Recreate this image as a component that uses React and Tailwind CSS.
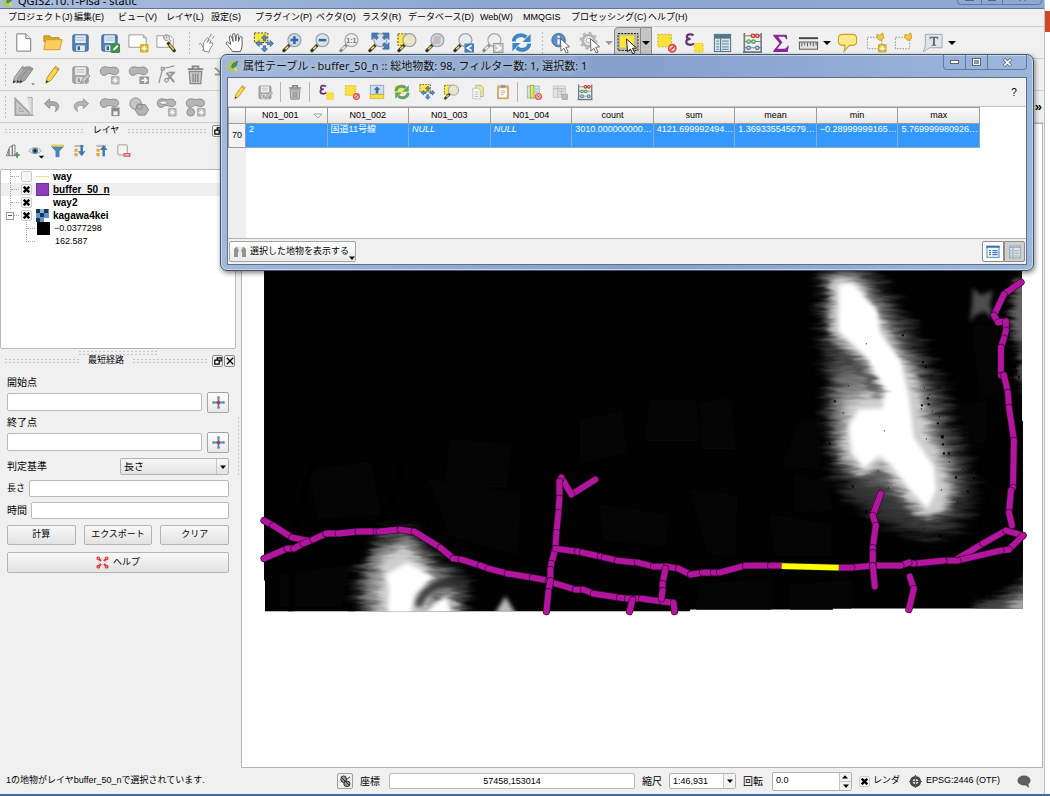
import React from "react";

/* ---------- icon drawings, all on a 24 unit grid ---------- */

function Svg({ children, className = "h-[23px] w-[23px]" }) {
  return (
    <svg viewBox="0 0 24 24" className={className} fill="none" aria-hidden="true">
      {children}
    </svg>
  );
}

const Star = ({ gray }) => (
  <g>
    <rect x="13.5" y="13.5" width="9" height="9" rx="1.5" fill={gray ? "#b0b0b0" : "#d9ae1f"} />
    <path d="M18 14.8v6.4M14.8 18h6.4M15.8 15.8l4.4 4.4M20.2 15.8l-4.4 4.4" stroke="#fff" strokeWidth="1" />
  </g>
);

const NewFile = () => (
  <Svg>
    <path d="M5 3h9.500l5 5v13H5z" fill="#fff" stroke="#777" />
    <path d="M14.500 3v5h5" fill="#eee" stroke="#777" />
  </Svg>
);

const Folder = () => (
  <Svg>
    <path d="M3 5h6l2 2h8v4H3z" fill="#d9a72c" stroke="#c08a1c" />
    <path d="M3 19.500L5 9h17l-2.500 10.500z" fill="#f8cf5c" stroke="#d29b26" />
  </Svg>
);

const DiskShape = ({ gray }) => (
  <g>
    <rect x="4" y="4" width="16" height="17" rx="1.500" fill={gray ? "#a9a9a9" : "#4f81b5"} stroke={gray ? "#8e8e8e" : "#33618f"} />
    <rect x="6.500" y="4.500" width="11" height="8" fill={gray ? "#efefef" : "#e3ecf5"} />
    <path d="M8 7h8M8 9.500h8" stroke={gray ? "#b5b5b5" : "#9db7d3"} />
    <rect x="7.500" y="15" width="9" height="6" fill="#e8e8e8" />
    <rect x="9" y="16" width="2.500" height="4" fill={gray ? "#999" : "#33618f"} />
  </g>
);
const Save = () => <Svg><DiskShape /></Svg>;
const SaveAs = () => (
  <Svg>
    <DiskShape />
    <rect x="13" y="13" width="10" height="10" rx="1.500" fill="#3f8f4a" />
    <path d="M15.500 20.500l1-2.500 3.500-3.500 1.500 1.500-3.500 3.500z" fill="#fff" />
  </Svg>
);
const SaveEdit = ({ className }) => (
  <Svg className={className}>
    <DiskShape gray />
    <path d="M12 21l1.500-4 6-6 2.500 2.500-6 6z" fill="#c4c4c4" stroke="#929292" />
  </Svg>
);

const NewComposer = () => (
  <Svg>
    <path d="M2 4h15l3 3v10H2z" fill="#fff" stroke="#999" />
    <path d="M17 4v3h3" stroke="#999" />
    <Star />
  </Svg>
);
const ComposerManager = () => (
  <Svg>
    <path d="M2 5h14l3 3v9H2z" fill="#fff" stroke="#999" />
    <path d="M9 5.500a3.500 3.500 0 0 0 4.500 4.500l2 2 1.500-1.500-2-2a3.500 3.500 0 0 0-4.500-4.500l2 2-1.500 1.800z" fill="#ddd" stroke="#888" strokeWidth=".8" />
    <path d="M14 13l6 7.500" stroke="#333" strokeWidth="3.500" strokeLinecap="round" />
    <path d="M15 14l4.500 5.500" stroke="#edc431" strokeWidth="2" />
  </Svg>
);
const Touch = () => (
  <Svg>
    <path d="M8 12l4-5 1.500 1-2 4 3-3 1 1-1.500 3 3-1 .5 2-3 5-1 3-5-1-1-4z" fill="#fff" stroke="#888" />
    <path d="M3 14l2-1 3 5-1 3M14 7l2-4M17 8l2-3" stroke="#888" />
  </Svg>
);
const Hand = () => (
  <Svg>
    <path d="M9 21.500c-2-3-4.500-6-6.500-8-1-1.500 1-2.500 2-1.500L7 14 5.500 6.500c0-1.800 2-1.800 2.500-.3L9.500 11 9 4c0-1.800 2.400-1.800 2.600 0l.7 6.500L13 4.500c.2-1.600 2.400-1.500 2.400.2L15 11l1.700-4.500c.6-1.400 2.500-.8 2.200.8C18.500 11 20 16 17 21.500z" fill="#fff" stroke="#555" />
  </Svg>
);
const PanSel = ({ className }) => (
  <Svg className={className}>
    <rect x="2.500" y="2" width="14" height="10" fill="#ffe837" stroke="#444" strokeDasharray="2 1.500" />
    <g fill="#5b89bd" stroke="#2f5f96" strokeWidth=".7">
      <path d="M13 4l3.200 3.500h-2v3h-2.400v-3h-2z" />
      <path d="M13 22l3.200-3.500h-2v-3h-2.400v3h-2z" />
      <path d="M4 13l3.500-3.200v2h3v2.400h-3v2z" />
      <path d="M22.500 13L19 9.800v2h-3v2.400h3v2z" />
    </g>
  </Svg>
);
const Lens = ({ fill = "#cfdce8", gray }) => (
  <g>
    <path d="M9 14.500l-6 6" stroke={gray ? "#888" : "#333"} strokeWidth="3.400" strokeLinecap="round" />
    <path d="M7.500 16l-3 3" stroke={gray ? "#eee" : "#f3cc3c"} strokeWidth="2" />
    <circle cx="14" cy="9.500" r="6.800" fill={fill} stroke={gray ? "#aaa" : "#9aa4ae"} strokeWidth="1.300" />
  </g>
);
const ZoomIn = () => <Svg><Lens /><path d="M14 5.500v8M10 9.500h8" stroke="#2f66a4" strokeWidth="2.600" /></Svg>;
const ZoomOut = () => <Svg><Lens fill="#dde4ea" /><path d="M10 9.500h8" stroke="#2f66a4" strokeWidth="2.600" /></Svg>;
const ZoomOne = () => (
  <Svg><Lens fill="#eee" gray /><text x="14" y="12.500" fontSize="7.500" fontWeight="bold" fill="#777" textAnchor="middle" fontFamily="Liberation Sans, sans-serif">1:1</text></Svg>
);
const ZoomFull = () => (
  <Svg>
    <Lens fill="#d8e2ea" />
    <g fill="#4a7db5" stroke="#2f5f96" strokeWidth=".6">
      <path d="M5 2h7L9.500 4.500l2.500 2L10 9 7.500 6.500 5 9z" />
      <path d="M23 2h-7l2.500 2.500-2.500 2L18 9l2.500-2.500L23 9z" />
      <path d="M23 19h-7l2.500-2.500-2.500-2 2-2.500 2.500 2.500L23 12z" />
    </g>
  </Svg>
);
const ZoomSel = ({ className }) => (
  <Svg className={className}><rect x="2" y="3" width="12" height="12" fill="#ffe837" stroke="#444" strokeDasharray="2 1.500" /><Lens fill="#e9e5c4" /></Svg>
);
const ZoomLayer = () => <Svg><Lens fill="#ddd8de" /><path d="M11 5h7l-1.500 8.500H9z" fill="#b9acb9" opacity=".7" /></Svg>;
const ZoomLast = () => (
  <Svg><Lens fill="#e9ecee" /><rect x="13" y="13" width="10" height="9.500" fill="#4a7db5" /><path d="M20.500 15l-4.500 2.800 4.500 2.700" stroke="#fff" strokeWidth="1.800" /></Svg>
);
const ZoomNext = () => (
  <Svg><Lens fill="#eee" gray /><rect x="13" y="13" width="10" height="9.500" fill="#ccc" stroke="#999" /><path d="M16 15l4.500 2.800-4.500 2.700" stroke="#fff" strokeWidth="1.800" /></Svg>
);
const Refresh = () => (
  <Svg>
    <path d="M4 11c0-6 8-9 13-4.500" stroke="#3f86c6" strokeWidth="4" />
    <path d="M21.500 3v8.500H13z" fill="#3f86c6" />
    <path d="M20 13c0 6-8 9-13 4.500" stroke="#3f86c6" strokeWidth="4" />
    <path d="M2.500 21v-8.500H11z" fill="#3f86c6" />
  </Svg>
);
const Pointer = ({ x = 0, y = 0 }) => (
  <path d={`M${11 + x} ${8 + y}l9.500 8.500-4 .5 2.500 5-2 1-2.500-5-3 3z`} fill="#fff" stroke="#555" strokeWidth=".9" />
);
const Info = () => (
  <Svg>
    <circle cx="10" cy="9.500" r="7" fill="#5c8fc6" stroke="#35679c" />
    <path d="M10 5v2M10 8.500v5.500" stroke="#fff" strokeWidth="2.300" />
    <Pointer x={1} />
  </Svg>
);
const Action = () => (
  <Svg>
    <circle cx="11" cy="10" r="6" stroke="#b4b4b4" strokeWidth="3" />
    <circle cx="11" cy="10" r="8.300" stroke="#b4b4b4" strokeWidth="2" strokeDasharray="3 3.500" />
    <circle cx="11" cy="10" r="2.500" stroke="#aaa" />
    <Pointer x={2} />
  </Svg>
);
const SelectTool = () => (
  <Svg className="h-6 w-6">
    <rect x="2" y="2.500" width="20" height="17" fill="#bdb998" stroke="#222" strokeDasharray="2 1.200" />
    <rect x="4" y="4.500" width="14" height="12" fill="#ffe43b" />
    <path d="M10.500 8l10 9-4 .3 2.300 4.500-2 1-2.300-4.700-3 2.700z" fill="#fff" stroke="#222" />
  </Svg>
);
const Deselect = ({ className }) => (
  <Svg className={className}>
    <rect x="3" y="3.500" width="14" height="13" fill="#fbe13b" stroke="#c9ac2a" strokeDasharray="2 1.500" />
    <circle cx="18" cy="18" r="3.800" fill="#f8caca" stroke="#dd4a4a" strokeWidth="1.700" />
    <path d="M15.500 20.500l5-5" stroke="#dd4a4a" strokeWidth="1.700" />
  </Svg>
);
const Epsilon = ({ className }) => (
  <Svg className={className}>
    <path d="M12 4.500c-3-2-7-1-7 1.500C5 7.700 7 8.300 9 8.300 6 8.300 4.500 9.500 4.500 11.500c0 3.200 5 3.700 8 1.600" stroke="#6a3172" strokeWidth="2.300" />
    <rect x="13" y="13" width="9" height="9" fill="#ffe23a" stroke="#e2c632" strokeDasharray="2 1.500" />
  </Svg>
);
const TableIcon = () => (
  <Svg>
    <rect x="3.500" y="3.500" width="17" height="18" fill="#dce8ee" stroke="#456a82" />
    <path d="M3.500 4h17v4h-17z" fill="#54798f" />
    <path d="M5.500 10.500h3M5.500 13.500h3M5.500 16.500h3M5.500 19.200h3M11.500 10.500h7M11.500 13.500h7M11.500 16.500h7M11.500 19.200h7" stroke="#6f93a7" strokeWidth="1.400" />
    <path d="M10 8v13" stroke="#456a82" />
  </Svg>
);
const Abacus = ({ className }) => (
  <Svg className={className}>
    <path d="M3.500 2v20M21 2v20M2 22h20" stroke="#777" strokeWidth="1.700" />
    <path d="M3 5h18M3 11h18M3 17.500h18" stroke="#777" />
    <g fill="#f8dcdc" stroke="#cf3030" strokeWidth="1.400"><circle cx="12.500" cy="5" r="1.800" /><circle cx="17" cy="5" r="1.800" /></g>
    <g fill="#dff3df" stroke="#49a349" strokeWidth="1.400"><circle cx="8" cy="11" r="1.800" /><circle cx="13" cy="11" r="1.800" /></g>
    <g fill="#dbe9f5" stroke="#4a7db5" strokeWidth="1.400"><circle cx="8" cy="17.500" r="1.800" /><circle cx="17" cy="17.500" r="1.800" /></g>
  </Svg>
);
const Sigma = () => (
  <Svg><path d="M5 4h13.500l.6 4.500h-1.300c-.6-2-1.500-2.400-3.300-2.400H9.500L14 12l-5.500 6.500h7c2.200 0 3-.8 4-3h1.200L19.500 22h-15v-1.300l6.500-8-6.500-7.500V4z" fill="#8c2596" /></Svg>
);
const Ruler = () => (
  <Svg>
    <path d="M2 7.500h20" stroke="#444" strokeWidth="2" />
    <rect x="2.500" y="11.500" width="19" height="7.500" fill="#e3e3e0" stroke="#555" />
    <path d="M5 12v4M8 12v3M11 12v4M14 12v3M17 12v4M20 12v3" stroke="#555" />
  </Svg>
);
const Tip = () => (
  <Svg><path d="M7 3.500h10c3 0 4.500 1.500 4.500 4v3.500c0 2.500-1.500 4-4.500 4h-3L8.500 21l1-6H7c-3 0-4.500-1.500-4.500-4V7.500c0-2.500 1.500-4 4.500-4z" fill="#fce98a" stroke="#c9a227" strokeWidth="1.200" /></Svg>
);
const BookmarkShape = () => (
  <g>
    <rect x="2.500" y="6.500" width="15" height="12" stroke="#888" strokeDasharray="1.500 1.500" fill="#f2f2f2" />
    <path d="M12.500 3.500l3 1 3-2.500 1 5.500-4 2.500-3-3z" fill="#f6cb3a" stroke="#cda026" />
  </g>
);
const NewBookmark = () => <Svg><BookmarkShape /><Star /></Svg>;
const Bookmarks = () => <Svg><BookmarkShape /></Svg>;
const TextTool = () => (
  <Svg>
    <path d="M4.500 3.500H22v14H9l-6.500 4 2-6z" fill="#dfe6ea" stroke="#9aa9b0" />
    <path d="M9 6h9v2.500h-.8c-.3-1-.8-1.300-2.700-1.300V14l1.300.6v.7h-4.600v-.7l1.300-.6V7.200c-1.900 0-2.400.3-2.700 1.300H9z" fill="#5f6a70" />
  </Svg>
);
const Arrow = ({ gray }) => (
  <svg viewBox="0 0 8 8" className="h-2 w-2" aria-hidden="true"><path d="M0 2h8L4 6z" fill={gray ? "#999" : "#000"} /></svg>
);
const SmallArrow = () => (
  <svg viewBox="0 0 8 8" className="h-1.5 w-1.5" aria-hidden="true"><path d="M0 2h8L4 6.500z" fill="#000" /></svg>
);

const PencilPath = ({ fill, stroke, dx = 0 }) => (
  <g transform={`translate(${dx} 0)`}>
    <path d="M4 21l1.500-6L14 3.500l4 2.500-8.500 12z" fill={fill} stroke={stroke} />
    <path d="M4 21l.7-3 2.300 1.300z" fill="#333" />
    <path d="M13 5l4 2.500" stroke={stroke} />
  </g>
);
const Pencil = ({ className }) => <Svg className={className}><PencilPath fill="#f8d64a" stroke="#b08f27" dx={1} /></Svg>;
const Pencils = () => (
  <Svg>
    <PencilPath fill="#b5b5b5" stroke="#888" dx={-3} />
    <PencilPath fill="#aaa" stroke="#8c8c8c" dx={1} />
    <PencilPath fill="#a2a2a2" stroke="#888" dx={4} />
    <path d="M20 21h4l-2 2.500z" fill="#888" />
  </Svg>
);
const Blob = () => <path d="M3 11C1 7 4 3.500 8 4c3 .5 3.500 1 6.500.5C19 3.500 22 6 21.500 9c-.5 3-4 4-7 2.500-3-1.300-4-.5-6 .8C6 13.500 4 13 3 11z" fill="#b5b5b5" stroke="#8d8d8d" />;
const AddFeature = () => <Svg><Blob /><Star gray /></Svg>;
const MoveFeature = () => <Svg><Blob /><rect x="13" y="14" width="10" height="8" fill="#999" /><path d="M15 18h5M18 15.500l2.700 2.500-2.700 2.500" stroke="#fff" strokeWidth="1.500" /></Svg>;
const Simplify = () => <Svg><Blob /><rect x="14" y="13" width="8.500" height="9" fill="#8b8b8b" /><rect x="16" y="17" width="4.500" height="4" fill="#eee" /></Svg>;
const FillRing = () => <Svg><Blob /><ellipse cx="9" cy="8" rx="4" ry="2" fill="#eee" stroke="#8d8d8d" /><Star gray /></Svg>;
const AddPart = () => <Svg><Blob /><circle cx="7" cy="18" r="4" fill="#b5b5b5" stroke="#8d8d8d" /><Star gray /></Svg>;
const AddRing = () => (
  <Svg>
    <circle cx="9" cy="9" r="6" fill="#c5c5c5" stroke="#8d8d8d" />
    <path d="M12 10h7l3.500 5.500L19 21h-7l-3.500-5.500z" fill="#b5b5b5" stroke="#888" />
    <circle cx="13" cy="12" r="3" stroke="#888" />
  </Svg>
);
const Node = () => (
  <Svg>
    <path d="M4 21L8 6M8 6l12-3" stroke="#999" strokeWidth="1.300" />
    <rect x="6.500" y="4.500" width="3" height="3" fill="#ddd" stroke="#888" />
    <path d="M12 10l8 10M19.500 10l-8 9" stroke="#999" strokeWidth="2.200" />
    <circle cx="12" cy="18" r="2" fill="#ddd" stroke="#888" />
    <path d="M14 10h7" stroke="#999" strokeWidth="2" />
  </Svg>
);
const Trash = ({ className }) => (
  <Svg className={className}>
    <path d="M4 6.500h16M9 6V3.500h6V6" stroke="#868686" strokeWidth="2" />
    <path d="M5.500 9h13l-1 12.500h-11z" fill="#ccc" stroke="#868686" strokeWidth="1.300" />
    <path d="M9.500 11v9M12 11v9M14.500 11v9" stroke="#868686" strokeWidth="1.400" />
  </Svg>
);
const Cut = () => <Svg><path d="M3 5l15 13M3 12h16" stroke="#999" strokeWidth="2" /></Svg>;
const Triangle = () => (
  <Svg>
    <path d="M3.500 4v17h17z" fill="#ccc" stroke="#a5a5a5" strokeWidth="2" />
    <path d="M8 13v4h4z" fill="#f0f0f0" stroke="#999" />
    <path d="M16 2.500h5v18h-2" fill="#ddd" stroke="#aaa" />
  </Svg>
);
const Undo = () => <Svg><path d="M9 4L3.500 9 9 14v-3c6-1 8 1 6 6.500C22 12 18 6 9 7z" fill="#aaa" stroke="#8f8f8f" /></Svg>;
const Redo = () => <Svg><path d="M15 4l5.500 5L15 14v-3c-6-1-8 1-6 6.500C2 12 6 6 15 7z" fill="#b5b5b5" stroke="#9a9a9a" /></Svg>;

const small = "h-[18px] w-[18px]";

const MoveTop = () => (
  <Svg className={small}>
    <rect x="3" y="3" width="18" height="12" fill="#cfe0ee" stroke="#7b9bb5" />
    <path d="M12 4.500l4.500 4.500h-2.700v5h-3.600V9H7.500z" fill="#3b6f9f" />
    <rect x="3" y="15.500" width="18" height="5" fill="#fbe13b" stroke="#c9b02c" />
  </Svg>
);
const Invert = () => (
  <Svg className={small}>
    <path d="M2 3h13v12H2z" fill="#f3e36c" />
    <path d="M4 11c0-6 8-9 13-4.500" stroke="#5fa466" strokeWidth="4" />
    <path d="M21 3v8.500h-8.500zM3 21v-8.500h8.500z" fill="#5fa466" />
    <path d="M20 13c0 6-8 9-13 4.500" stroke="#5fa466" strokeWidth="4" />
  </Svg>
);
const Copy = () => (
  <Svg className={small}>
    <path d="M9 3h7l3 3v12H9z" fill="#ece4a0" stroke="#b7a95b" />
    <path d="M5 7h7l3 3v11H5z" fill="#f8f8f4" stroke="#b5b5b5" />
    <path d="M7.500 12h5M7.500 15h5M7.500 18h5" stroke="#aaa" />
  </Svg>
);
const Paste = () => (
  <Svg className={small}>
    <rect x="5" y="4" width="14" height="17" fill="#e0b878" stroke="#bb9050" />
    <rect x="7" y="7" width="10" height="12" fill="#fff" />
    <rect x="9" y="2.500" width="6" height="4" fill="#999" />
    <path d="M9 10.500h6M9 13h6M9 15.500h4" stroke="#999" />
  </Svg>
);
const DelCol = () => (
  <Svg className={small}>
    <rect x="3" y="4" width="16" height="16" fill="#d5e6ea" stroke="#8cacb5" />
    <rect x="7" y="3" width="5" height="17" fill="#f5e23d" stroke="#77a15f" />
    <path d="M13 8h5M13 12h5" stroke="#8cacb5" />
    <circle cx="18" cy="18" r="4" fill="#f3b9b9" stroke="#d55" strokeWidth="1.500" />
    <path d="M16.500 16.500l3 3M19.500 16.500l-3 3" stroke="#c33" />
  </Svg>
);
const NewCol = () => (
  <Svg className={small}>
    <rect x="3" y="4" width="16" height="15" fill="#e4e4e4" stroke="#bdbdbd" />
    <path d="M3 7.500h16M9 4v15M14 7v12M11 11h7M11 15h4" stroke="#bcbcbc" strokeWidth="1.300" />
    <rect x="15" y="15" width="7" height="7" fill="#bbb" stroke="#a5a5a5" />
  </Svg>
);
const QLogo = ({ className }) => (
  <Svg className={className}>
    <path d="M14 5C8 4 4 8 4 13s3 8 7 8c2 0 4-1 5-2" stroke="#bccb35" strokeWidth="4.500" />
    <path d="M9 14l2-6 10-6-2 9-7 6z" fill="#3f9a3c" stroke="#236b2a" />
    <path d="M14 16l6 6" stroke="#e0dc52" strokeWidth="4" />
  </Svg>
);

/* ---------- small shared pieces ---------- */

function Tool({ label, children }) {
  return (
    <button type="button" aria-label={label} className="flex h-full min-w-0 items-center justify-center">
      {children}
    </button>
  );
}

const Grip = () => (
  <span className="flex h-full items-center justify-end pr-px">
    <span className="h-6 w-1 bg-[radial-gradient(#bdbdbd_1px,transparent_1px)] bg-[length:3px_4px]" />
  </span>
);

const Dots = ({ className }) => (
  <span className={"h-[5px] bg-[radial-gradient(#c6c6c6_1px,transparent_1px)] bg-[length:4px_3px] " + className} />
);

const Sep = () => <span className="mx-auto h-5 w-px bg-[#b4b4b4]" />;

function DockTitle({ title }) {
  return (
    <div className="flex h-[15px] shrink-0 items-center gap-2 pl-1">
      <Dots className="flex-1" />
      <h2 className="text-[9px]">{title}</h2>
      <Dots className="flex-1" />
      <div className="-ml-1 flex gap-px pr-px">
        <button type="button" aria-label="フロート" className="flex h-3 w-[11px] items-center justify-center rounded-xs border border-[#8a8a8a]">
          <svg viewBox="0 0 10 10" className="h-2 w-2" fill="none" stroke="#000" strokeWidth="1.500"><path d="M4 3V1h5v4H7M1 4h5.500v5H1z" /></svg>
        </button>
        <button type="button" aria-label="閉じる" className="flex h-3 w-[11px] items-center justify-center rounded-xs border border-[#8a8a8a]">
          <svg viewBox="0 0 10 10" className="h-2 w-2" stroke="#000" strokeWidth="1.700"><path d="M1 1l8 8M9 1L1 9" /></svg>
        </button>
      </div>
    </div>
  );
}

/* ---------- main window ---------- */

const MENUS = [
  "プロジェクト(J)", "編集(E)", "ビュー(V)", "レイヤ(L)", "設定(S)", "プラグイン(P)", "ベクタ(O)",
  "ラスタ(R)", "データベース(D)", "Web(W)", "MMQGIS", "プロセッシング(C)", "ヘルプ(H)",
];

function MenuBar() {
  return (
    <nav className="grid h-[18px] shrink-0 grid-cols-[66px_44px_48px_45px_44px_61px_46px_46px_72px_43px_48px_77px_40px] items-center border-b border-[#cfcfcf] pl-2 text-[9px]">
      {MENUS.map((m) => (
        <button key={m} type="button" className="whitespace-nowrap text-left">{m}</button>
      ))}
    </nav>
  );
}

function MainToolbar() {
  return (
    <div className="grid h-8 shrink-0 grid-cols-[9px_29px_28px_29px_29px_28px_29px_12px_28px_28px_29px_28px_29px_29px_29px_28px_28px_29px_29px_28px_11px_29px_28px_11px_27px_11px_28px_27px_31px_28px_28px_28px_10px_30px_28px_28px_28px_11px] items-center border-b border-[#cfcfcf]">
      <Grip />
      <Tool label="新規"><NewFile /></Tool>
      <Tool label="開く"><Folder /></Tool>
      <Tool label="保存"><Save /></Tool>
      <Tool label="名前をつけて保存"><SaveAs /></Tool>
      <Tool label="新規コンポーザ"><NewComposer /></Tool>
      <Tool label="コンポーザマネージャ"><ComposerManager /></Tool>
      <Grip />
      <Tool label="タッチ"><Touch /></Tool>
      <Tool label="地図を移動"><Hand /></Tool>
      <Tool label="選択部分に移動"><PanSel /></Tool>
      <Tool label="拡大"><ZoomIn /></Tool>
      <Tool label="縮小"><ZoomOut /></Tool>
      <Tool label="原寸"><ZoomOne /></Tool>
      <Tool label="全域表示"><ZoomFull /></Tool>
      <Tool label="選択部分にズーム"><ZoomSel /></Tool>
      <Tool label="レイヤにズーム"><ZoomLayer /></Tool>
      <Tool label="直前の表示領域"><ZoomLast /></Tool>
      <Tool label="次の表示領域"><ZoomNext /></Tool>
      <Tool label="更新"><Refresh /></Tool>
      <Grip />
      <Tool label="地物情報"><Info /></Tool>
      <Tool label="アクション"><Action /></Tool>
      <Tool label="アクションメニュー"><Arrow gray /></Tool>
      <button type="button" aria-label="地物選択" className="flex h-full items-center justify-center rounded-l border border-[#8a8a8a] bg-[#cdcdcd]"><SelectTool /></button>
      <button type="button" aria-label="選択メニュー" className="flex h-full items-center justify-center border border-l-0 border-[#8a8a8a] bg-[#c4c4c4]"><Arrow /></button>
      <Tool label="選択解除"><Deselect /></Tool>
      <Tool label="式による選択"><Epsilon /></Tool>
      <Tool label="属性テーブル"><TableIcon /></Tool>
      <Tool label="フィールド計算機"><Abacus /></Tool>
      <Tool label="統計"><Sigma /></Tool>
      <Tool label="計測"><Ruler /></Tool>
      <Tool label="計測メニュー"><Arrow /></Tool>
      <Tool label="マップチップス"><Tip /></Tool>
      <Tool label="新規ブックマーク"><NewBookmark /></Tool>
      <Tool label="ブックマーク"><Bookmarks /></Tool>
      <Tool label="テキスト注記"><TextTool /></Tool>
      <Tool label="注記メニュー"><Arrow /></Tool>
    </div>
  );
}

function EditToolbars() {
  return (
    <>
      <div className="grid h-8 shrink-0 grid-cols-[9px_29px_28px_29px_29px_28px_29px_28px_28px] items-center border-b border-[#cfcfcf]">
        <Grip />
        <Tool label="現在の編集"><Pencils /></Tool>
        <Tool label="編集モード"><Pencil /></Tool>
        <Tool label="編集内容の保存"><SaveEdit /></Tool>
        <Tool label="地物の追加"><AddFeature /></Tool>
        <Tool label="地物の移動"><MoveFeature /></Tool>
        <Tool label="ノードツール"><Node /></Tool>
        <Tool label="選択物の削除"><Trash /></Tool>
        <Tool label="地物の切り取り"><Cut /></Tool>
      </div>
      <div className="flex h-8 shrink-0 items-center border-b border-[#cfcfcf]">
        <div className="grid h-full grid-cols-[9px_29px_28px_29px_29px_28px_29px_28px] items-center">
          <Grip />
          <Tool label="高度なデジタイジング"><Triangle /></Tool>
          <Tool label="元に戻す"><Undo /></Tool>
          <Tool label="やり直し"><Redo /></Tool>
          <Tool label="簡素化"><Simplify /></Tool>
          <Tool label="リングの追加"><AddRing /></Tool>
          <Tool label="リングの充填"><FillRing /></Tool>
          <Tool label="部分の追加"><AddPart /></Tool>
        </div>
        <button type="button" className="ml-auto pr-[2px] text-[13px] font-bold">»</button>
      </div>
    </>
  );
}

const rowClass = "flex h-[13px] items-center";

function Check({ id, label, checked }) {
  return (
    <span className="relative flex h-[11px] w-[11px] shrink-0 items-center justify-center">
      <input id={id} type="checkbox" aria-label={label} defaultChecked={checked} className="peer h-[11px] w-[11px] appearance-none rounded-xs border border-[#cacaca] bg-[#f6f6f6]" />
      <svg viewBox="0 0 10 10" className="pointer-events-none absolute hidden h-[7px] w-[7px] peer-checked:block" stroke="#000" strokeWidth="3.400"><path d="M1 1l8 8M9 1L1 9" /></svg>
    </span>
  );
}

const branch = "border-dotted border-[#aaa]";

function LayerPanel() {
  return (
    <section className="flex h-[226px] shrink-0 flex-col">
      <DockTitle title="レイヤ" />
      <div className="flex h-[31px] shrink-0 items-start gap-1 pl-[5px] pt-[5px]">
        <button type="button" aria-label="グループ追加" className="w-[19px]">
          <Svg className="h-4 w-4"><path d="M2 19L6 9v10zM6 19V7l5-3v15zM11 19V3h4v16z" fill="#f2f2f2" stroke="#777" strokeWidth="1.400" /><path d="M18 14v8M14 18h8" stroke="#5a9a5a" strokeWidth="3" /></Svg>
        </button>
        <button type="button" aria-label="表示管理" className="w-[18px]">
          <Svg className="h-[17px] w-[17px]"><path d="M1 11c5-6 13-6 18 0-5 5-13 5-18 0z" fill="#dde5ec" stroke="#999" /><circle cx="10" cy="11" r="4" fill="#3e6c96" /><circle cx="10" cy="11" r="1.600" fill="#111" /><path d="M15 18h8l-4 4z" fill="#000" /></Svg>
        </button>
        <button type="button" aria-label="フィルタ" className="w-[18px]">
          <Svg className="h-[15px] w-[15px]"><path d="M2 5h20l-7.500 8v9h-5v-9z" fill="#4f86bd" stroke="#386a9b" /><path d="M2 2.500h20V6H2z" fill="#e4cf4f" /></Svg>
        </button>
        <button type="button" aria-label="全て展開" className="w-[18px]">
          <Svg className="h-[15px] w-[15px]"><rect x="4" y="3" width="15" height="3.500" fill="#bbb" /><path d="M4 9h5v5H4zM4 16h5v5H4z" fill="#e7a43a" /><path d="M13.500 3v10H9.500l6 8 6-8h-4V3z" fill="#3e77b4" /></Svg>
        </button>
        <button type="button" aria-label="全て折りたたむ" className="w-[18px]">
          <Svg className="h-[15px] w-[15px]"><rect x="4" y="3" width="15" height="3.500" fill="#bbb" /><path d="M4 9h5v5H4zM4 16h5v5H4z" fill="#e7a43a" /><path d="M13.500 21V11H9.500l6-8 6 8h-4v10z" fill="#3e77b4" /></Svg>
        </button>
        <button type="button" aria-label="レイヤ削除" className="w-[18px]">
          <Svg className="h-[15px] w-[15px]"><rect x="3" y="3" width="15" height="16" rx="1" fill="#f4f4f4" stroke="#999" strokeWidth="1.500" /><path d="M12 16h11v6H12z" fill="#e45454" /><path d="M14 19h7" stroke="#fff" strokeWidth="1.500" /></Svg>
        </button>
      </div>
      <ul className="flex-1 rounded-xs border border-[#b8b8b8] bg-white text-[10px] font-bold">
        <li className={rowClass + " pl-[9px]"}>
          <span className={"h-full w-px border-l " + branch} /><span className={"mr-[2px] w-2 border-t " + branch} />
          <Check id="l1" label="way" />
          <span className="mx-1 h-px w-[13px] bg-[#f0dc9a]" /><span className="leading-none">way</span>
        </li>
        <li className={rowClass + " bg-[#efefef] pl-[9px]"}>
          <span className={"h-full w-px border-l " + branch} /><span className={"mr-[2px] w-2 border-t " + branch} />
          <Check id="l2" label="buffer_50_n" checked />
          <span className="mx-1 h-[13px] w-[13px] border border-[#6d2f99] bg-[#8e3cbb]" /><span className="leading-none underline">buffer_50_n</span>
        </li>
        <li className={rowClass + " pl-[9px]"}>
          <span className={"h-full w-px border-l " + branch} /><span className={"mr-[2px] w-2 border-t " + branch} />
          <Check id="l3" label="way2" checked />
          <span className="mx-1 w-[13px]" /><span className="leading-none">way2</span>
        </li>
        <li className={rowClass + " pl-[5px]"}>
          <button type="button" aria-label="折りたたむ" className="flex h-2 w-2 items-center justify-center border border-[#9a9a9a]"><span className="h-px w-1 bg-[#555]" /></button>
          <span className={"mr-[2px] w-[5px] border-t " + branch} />
          <Check id="l4" label="kagawa4kei" checked />
          <svg viewBox="0 0 13 13" className="mx-1 h-[13px] w-[13px]" aria-hidden="true">
            <path d="M0 0h13v13H0z" fill="#5f93cf" /><path d="M0 0h4v4H0zM8 0h4v4H8zM4 4h4v4H4zM0 9h4v4H0z" fill="#22344c" /><path d="M4 0h4v4H4z" fill="#89b2e0" /><path d="M8 9h5v4H8z" fill="#fff" />
          </svg>
          <span className="leading-none">kagawa4kei</span>
        </li>
        <li className={rowClass + " pl-[25px] text-[9px] font-normal"}>
          <span className={"h-full w-px border-l " + branch} /><span className={"mr-[2px] w-2 border-t " + branch} /><span className="mr-1 h-[13px] w-[13px] bg-black" /><span>−0.0377298</span>
        </li>
        <li className={rowClass + " pl-[25px] text-[9px] font-normal"}>
          <span className={"mb-auto h-[7px] w-[9px] border-b border-l " + branch} /><span className="ml-5">162.587</span>
        </li>
      </ul>
    </section>
  );
}

const fieldClass = "min-w-0 flex-1 rounded-xs border border-[#b9b9b9] bg-white px-1 text-[9px]";
const pushClass = "flex items-center justify-center gap-1 rounded-xs border border-[#b4b4b4] bg-linear-to-b from-[#f8f8f8] to-[#e2e2e2] text-[9px]";

function PickButton({ label }) {
  return (
    <button type="button" aria-label={label} className="flex h-[21px] w-[22px] items-center justify-center rounded-xs border border-[#a4a4a4] bg-linear-to-b from-white to-[#e8e8e8]">
      <svg viewBox="0 0 14 14" className="h-[13px] w-[13px]" aria-hidden="true">
        <path d="M7 1v12M1 7h12" stroke="#3b8fd0" strokeWidth="2" /><path d="M5.500 1h3M5.500 13h3M1 5.500v3M13 5.500v3" stroke="#777" /><circle cx="7" cy="7" r="2" fill="#e03030" />
      </svg>
    </button>
  );
}

function RoutePanel() {
  return (
    <section>
      <div className="flex h-1 justify-center pt-px"><Dots className="w-20" /></div>
      <DockTitle title="最短経路" />
      <form className="flex flex-col pl-[7px] pr-[7px] text-[10px]" onSubmit={(e) => e.preventDefault()}>
        <label htmlFor="start" className="mt-[7px] h-[15px] leading-[15px]">開始点</label>
        <div className="mt-[1px] flex h-[22px] items-center gap-[5px]"><input id="start" className={fieldClass + " h-[18px]"} /><PickButton label="開始点を指定" /></div>
        <label htmlFor="end" className="mt-[2px] h-[15px] leading-[15px]">終了点</label>
        <div className="mt-[1px] flex h-[22px] items-center gap-[5px]"><input id="end" className={fieldClass + " h-[18px]"} /><PickButton label="終了点を指定" /></div>
        <div className="mt-[5px] flex h-[17px] items-center justify-between">
          <label htmlFor="crit">判定基準</label>
          <span className="relative">
            <select id="crit" className="block h-[17px] w-[109px] appearance-none rounded-xs border border-[#b0b0b0] bg-linear-to-b from-[#f8f8f8] to-[#e2e2e2] pl-[3px] text-[10px] leading-none"><option>長さ</option></select>
            <span className="pointer-events-none absolute inset-y-px right-px flex w-3 items-center justify-center border-l border-[#c4c4c4]"><SmallArrow /></span>
          </span>
        </div>
        <div className="mt-[5px] flex h-[17px] items-center gap-1"><label htmlFor="len" className="text-[9px]">長さ</label><input id="len" className={fieldClass + " h-[17px]"} /></div>
        <div className="mt-[5px] flex h-[17px] items-center gap-1"><label htmlFor="time">時間</label><input id="time" className={fieldClass + " h-[17px]"} /></div>
        <div className="mt-[6px] grid grid-cols-3 gap-2">
          <button type="button" className={pushClass + " h-5"}>計算</button>
          <button type="button" className={pushClass + " h-5"}>エクスポート</button>
          <button type="button" className={pushClass + " h-5"}>クリア</button>
        </div>
        <button type="button" className={pushClass + " mt-[7px] h-[21px]"}>
          <svg viewBox="0 0 14 14" className="h-[13px] w-[13px]" fill="none" aria-hidden="true">
            <circle cx="7" cy="7" r="4" stroke="#ddd" strokeWidth="2" /><g stroke="#df3c3c" strokeWidth="1.500"><circle cx="2.500" cy="2.500" r="1.300" /><circle cx="11.500" cy="2.500" r="1.300" /><circle cx="2.500" cy="11.500" r="1.300" /><circle cx="11.500" cy="11.500" r="1.300" /><path d="M3.500 3.500l2 2M10.500 3.500l-2 2M3.500 10.500l2-2M10.500 10.500l-2-2" strokeWidth="2" /></g>
          </svg>
          ヘルプ
        </button>
      </form>
    </section>
  );
}

/* ---------- map ---------- */

const ROADS = [
  [[264,520],[273,525],[292,537],[308,540]],
  [[264,558],[287,548],[294,548],[303,543],[313,539],[326,533],[338,533],[358,531],[376,531],[379,531],[400,529],[414,531],[440,547],[453,558],[461,559],[480,565],[488,568],[507,573],[532,577],[548,580],[555,583],[575,589],[583,589],[593,593],[619,597],[627,598],[641,598],[662,601],[673,602],[674,611]],
  [[632,599],[629,611]],
  [[595,479],[571,494],[561,477],[559,481],[559,498],[558,512],[556,532],[555,548],[551,563],[550,569],[550,580],[548,591],[546,611]],
  [[555,548],[577,551],[582,552],[600,556],[604,557],[617,560],[637,562],[653,566],[666,566],[678,568],[690,574],[702,572],[713,572],[719,572],[745,565],[770,565],[782,565]],
  [[665,568],[662,583],[662,590],[661,598]],
  [[1020,282],[1003,294],[993,315],[997,322],[1005,321],[1005,330],[1003,338],[1000,347],[1000,375],[1003,375],[1007,392],[1008,407],[1013,440],[1012,487],[1010,490],[1008,512],[1011,525]],
  [[957,558],[982,543],[1005,530],[1022,535],[1008,549],[1000,550],[957,560],[943,560],[913,563],[908,562],[900,565],[872,565],[851,567],[838,567]],
  [[880,493],[872,515],[875,525],[872,547],[872,552],[872,565],[874,586]],
  [[909,576],[913,588],[908,609]],
];

const SPECKS = [
  [865,343,1],[883,430,1],[901,334,2],[903,331,1],[921,361,2],[924,366,2],[930,375,1],[923,387,1],[926,397,2],[928,394,1],[927,403,2],[920,404,2],[920,408,1],[931,410,1],[936,422,2],[940,435,3],[941,443,2],[942,452,2],[947,452,2],[948,461,1],[938,387,1],[938,416,1],[954,476,2],[966,490,2],[972,477,2],[956,501,1],[938,534,3],[961,468,1],[833,400,2],[842,412,1],[828,442,2],[833,455,1],[877,470,1],[851,485,2],[887,487,1],[940,489,1],[922,528,1],[864,510,3],[1012,365,3],[1014,370,2],[1017,376,2],[984,587,6],[979,592,5],[965,604,3],[999,585,2],[847,385,1],[913,346,1],[925,438,1],
];

const FIELDS = [
  "M650 400h45l4 40h-53z", "M700 404l30-6 4 50h-32z", "M580 420l40-8 6 40-46 10z", "M800 420l20-2-2 50-36-2z", "M450 440l60 4-4 42h-60z",
  "M310 470l60-8 10 50-62 6z", "M795 475l30 8 6 26-36 2z", "M972 326l24 2 4 60-20 10z", "M962 405l22-4 2 40-20 2z", "M280 575l70-10-10 40h-60z",
  "M690 490l46 6-2 60-26-4z", "M600 505l66 10-2 30-60-6z", "M430 480l90 14-4 60-66-20z", "M770 515l60 10v30h-54z", "M700 585l70-6v30h-74z", "M790 585l60-4v28h-60z",
];

function MapCanvas() {
  return (
    <svg viewBox="242 124 799 643" preserveAspectRatio="xMinYMin slice" className="absolute inset-0 h-full w-full" role="img" aria-label="地図">
      <defs>
        <clipPath id="raster"><path d="M264 200H1021V420l1 1V608H832v1H690l-1 2H265V580h-1z" /></clipPath>
        <filter id="soft" x="-30%" y="-30%" width="160%" height="160%" colorInterpolationFilters="sRGB">
          <feGaussianBlur stdDeviation="7" result="b" />
          <feTurbulence type="fractalNoise" baseFrequency="0.03 0.16" numOctaves="3" seed="4" result="n" />
          <feDisplacementMap in="b" in2="n" scale="22" xChannelSelector="R" yChannelSelector="G" />
        </filter>
        <filter id="mid" x="-30%" y="-30%" width="160%" height="160%" colorInterpolationFilters="sRGB">
          <feGaussianBlur stdDeviation="4" result="b" />
          <feTurbulence type="fractalNoise" baseFrequency="0.04 0.2" numOctaves="2" seed="11" result="n" />
          <feDisplacementMap in="b" in2="n" scale="16" xChannelSelector="R" yChannelSelector="G" />
        </filter>
        <filter id="core" x="-20%" y="-20%" width="140%" height="140%" colorInterpolationFilters="sRGB">
          <feGaussianBlur stdDeviation="2" />
        </filter>
      </defs>
      <g clipPath="url(#raster)">
        <path d="M240 190h800v440H240z" fill="#020202" />
        {FIELDS.map((d) => <path key={d} d={d} fill="#050505" stroke="#080808" />)}
        <path d="M311 462c-6 30-16 60-18 90s0 40-2 60M401 462c0 30-22 50-24 66s-22 40-26 84" stroke="#000" strokeWidth="7" fill="none" />

        <g filter="url(#soft)">
          <path d="M824 262l-4 60 8 34-2 70 6 40 14 28 26 20 34 18 36 4 22-16 8-36-14-46-18-50-28-56-28-44-14-26z" fill="#333" />
          <path d="M827 268l-3 50 10 36-2 26-4 40 10 44 24 14 32 18 24 20 28-6 12-28-14-52-20-48-28-54-24-42-14-18z" fill="#5e5e5e" />
          <path d="M830 272l-3 52 18 26 14 24-24 14-2 40 10 36 30 2 32 28 18 20 24-10 6-26-16-48-18-46-28-52-22-40-12-18z" fill="#888" />
        </g>
        <g filter="url(#mid)">
          <path d="M832 276l-1 56 24 22 20 26 2 12-30 8-6 46 14 26 26-6 22 26 22 26 22-8 2-28-20-46-14-52-22-40-24-38-14-26z" fill="#cfcfcf" />
        </g>
        <g filter="url(#core)" fill="#fff">
          <path d="M838 284l14-1 25 28 2 21 21 29 8 36 5 40 20 29 2 24-8 18-19-20-19-25-11-8-15 13-12-16-3-26 10-17 24-1 1-20-19-33-26-24z" />
        </g>
        <path d="M826 350c20 8 38 16 52 46" stroke="#222" strokeWidth="7" fill="none" filter="url(#mid)" opacity=".75" />

        <g filter="url(#soft)">
          <path d="M382 534l28-4 22 26 20 14 14 12-2 46h-98l-8-48z" fill="#4c4c4c" />
          <path d="M384 545l20-8 20 22 16 12-4 50h-66l-8-44z" fill="#909090" />
        </g>
        <g filter="url(#mid)">
          <path d="M382 560l20-16 28 28-6 44h-46z" fill="#cfcfcf" />
          <path d="M424 610l14-8 10-14 14 28h-36z" fill="#bbb" />
        </g>
        <g filter="url(#core)" fill="#fff">
          <path d="M386 574l21-12 25 14-18 18-5 30h-22l2-36z" />
          <path d="M426 612l8-8 12-8 6 20h-26z" />
        </g>
        <path d="M418 606c4-18 22-28 50-22" stroke="#303030" strokeWidth="8" fill="none" filter="url(#core)" opacity=".85" />
        <path d="M494 614l11-18 11 18z" fill="#bbb" filter="url(#core)" />

        <g filter="url(#core)">
          <path d="M972 288l8 7 12-5-3 14 4 16-10-9-9 4-5 8 2-18z" fill="#4d4d4d" />
        </g>
        <g filter="url(#mid)">
          <path d="M1014 276h14v124l-10-24 2-30-10-14z" fill="#666" />
          <path d="M960 622l22-24 24-4 24-24v52z" fill="#444" />
          <path d="M1000 616l28-28v34z" fill="#aaa" />
        </g>
        {SPECKS.map(([x, y, r], i) => <rect key={i} x={x} y={y} width={r} height={r} fill="#000" />)}
      </g>
      {ROADS.map((road, i) => (
        <g key={i} strokeLinecap="round">
          {road.slice(1).map((p, j) => {
            const q = road[j];
            return (
              <g key={j}>
                <line x1={q[0]} y1={q[1]} x2={p[0]} y2={p[1]} stroke="#3c0a38" strokeWidth="7.200" />
                <line x1={q[0]} y1={q[1]} x2={p[0]} y2={p[1]} stroke="#b3159f" strokeWidth="5.800" />
              </g>
            );
          })}
        </g>
      ))}
      <path d="M781 565.500L838 567" stroke="#2c2c00" strokeWidth="7" />
      <path d="M781 565.500L838 567" stroke="#ffff00" strokeWidth="5.800" />
    </svg>
  );
}

/* ---------- status bar ---------- */

function StatusBar() {
  return (
    <footer className="flex h-[26px] shrink-0 items-center pl-[6px] text-[9px]">
      <p className="w-[331px] shrink-0 whitespace-nowrap">1の地物がレイヤbuffer_50_nで選択されています.</p>
      <button type="button" aria-label="座標表示切替" className="flex h-4 w-4 items-center justify-center rounded-xs border border-[#a0a0a0]">
        <svg viewBox="0 0 14 14" className="h-[13px] w-[13px]" fill="#999" stroke="#222" aria-hidden="true"><ellipse cx="5" cy="4.500" rx="3" ry="3.500" /><ellipse cx="8.500" cy="9.500" rx="3.300" ry="3" /><path d="M2 2l10 10M8 5l4-3" /></svg>
      </button>
      <label htmlFor="coord" className="ml-[7px] w-[29px] text-[10px]">座標</label>
      <input id="coord" defaultValue="57458,153014" className="h-4 min-w-0 flex-1 rounded-xs border border-[#b9b9b9] bg-white text-center text-[9px]" />
      <label htmlFor="scale" className="ml-[7px] w-[27px] text-[10px]">縮尺</label>
      <span className="relative">
        <select id="scale" className="block h-4 w-[67px] appearance-none rounded-xs border border-[#b0b0b0] bg-white pl-[3px] text-[9px] leading-none"><option>1:46,931</option></select>
        <span className="pointer-events-none absolute inset-y-px right-px flex w-3 items-center justify-center border-l border-[#c4c4c4] bg-[#f2f2f2]"><SmallArrow /></span>
      </span>
      <label htmlFor="rot" className="ml-[7px] w-[29px] text-[10px]">回転</label>
      <span className="flex h-[19px] w-[80px] rounded-xs border border-[#b0b0b0] bg-white">
        <input id="rot" defaultValue="0.0" className="min-w-0 flex-1 px-[3px] text-[9px]" />
        <span className="flex w-3 flex-col border-l border-[#c4c4c4] bg-[#f2f2f2]">
          <button type="button" aria-label="増やす" className="flex flex-1 rotate-180 items-center justify-center"><SmallArrow /></button>
          <button type="button" aria-label="減らす" className="flex flex-1 items-center justify-center border-t border-[#c4c4c4]"><SmallArrow /></button>
        </span>
      </span>
      <span className="ml-[7px]"><Check id="render" label="レンダ" checked /></span>
      <label htmlFor="render" className="ml-[3px] w-[36px]">レンダ</label>
      <button type="button" className="flex w-[108px] items-center gap-1 whitespace-nowrap">
        <svg viewBox="0 0 14 14" className="h-[13px] w-[13px]" aria-hidden="true"><circle cx="7" cy="7" r="4.500" fill="#ddd" stroke="#444" strokeWidth="3" /><path d="M7 0v14M0 7h14" stroke="#555" strokeWidth="1.300" /></svg>
        EPSG:2446 (OTF)
      </button>
      <button type="button" aria-label="メッセージ" className="mr-[13px]">
        <svg viewBox="0 0 14 14" className="h-[14px] w-[14px]" aria-hidden="true"><ellipse cx="7" cy="6.500" rx="6.500" ry="5" fill="#5c5c5c" /><path d="M7 10l5 4-1-6z" fill="#5c5c5c" /></svg>
      </button>
    </footer>
  );
}

/* ---------- attribute table window ---------- */

const COLUMNS = ["N01_001", "N01_002", "N01_003", "N01_004", "count", "sum", "mean", "min", "max"];
const VALUES = ["2", "国道11号線", "NULL", "NULL", "3010.000000000…", "4121.699992494…", "1.369335545679…", "−0.28999999165…", "5.769999980926…"];

function AttributeDialog() {
  return (
    <div role="dialog" aria-label="属性テーブル" className="absolute left-[220px] right-[16px] top-[54px] flex h-[217px] flex-col rounded-[7px] border border-[#45536b] bg-linear-to-r from-[#a3b9da] via-[#859fca] to-[#9cb6dc] px-[6px] pb-[5px] shadow-[1px_2px_5px_rgba(0,0,0,0.5),inset_0_0_0_1px_#c6d5ea]">
      <div className="flex h-[22px] shrink-0 items-start justify-between">
        <div className="flex h-[22px] items-center gap-1 whitespace-nowrap font-['Noto_Sans','Noto_Sans_CJK_JP',sans-serif] text-[11px] text-[#111] [text-shadow:0_0_6px_#e5edf7]">
          <QLogo className="h-3 w-3" />
          <h1>属性テーブル - buffer_50_n :: 総地物数: 98, フィルター数: 1, 選択数: 1</h1>
        </div>
        <div className="flex h-[15px] rounded-b border border-t-0 border-[#61799d] text-[#61799d]">
          <button type="button" aria-label="最小化" className="flex w-[22px] items-center justify-center border-r border-current"><span className="h-[4px] w-[9px] border border-[#5a6577] bg-white" /></button>
          <button type="button" aria-label="最大化" className="flex w-[22px] items-center justify-center border-r border-current"><span className="h-[8px] w-[9px] border border-[#5a6577] bg-[#8a97ab] outline -outline-offset-2 outline-white" /></button>
          <button type="button" aria-label="閉じる" className="flex w-[38px] items-center justify-center">
            <svg viewBox="0 0 10 10" className="h-[9px] w-[9px]"><path d="M1 1l8 8M9 1L1 9" stroke="#5a6577" strokeWidth="3.500" /><path d="M1.500 1.500l7 7M8.500 1.500l-7 7" stroke="#fff" strokeWidth="1.800" /></svg>
          </button>
        </div>
      </div>
      <div className="flex min-h-0 flex-1 flex-col border border-[#5f6f88] bg-[#f0f0f0]">
        <div className="grid h-[29px] shrink-0 grid-cols-[23px_27px_4px_25px_5px_27px_25px_25px_25px_25px_26px_25px_25px_5px_27px_25px_25px_1fr_24px] items-center border-b border-[#c2c2c2]">
          <Tool label="編集モード"><Pencil className={small} /></Tool>
          <Tool label="保存"><SaveEdit className={small} /></Tool>
          <Sep />
          <Tool label="削除"><Trash className={small} /></Tool>
          <Sep />
          <Tool label="式による選択"><Epsilon className={small} /></Tool>
          <Tool label="選択解除"><Deselect className={small} /></Tool>
          <Tool label="選択を先頭へ"><MoveTop /></Tool>
          <Tool label="選択の反転"><Invert /></Tool>
          <Tool label="選択行へ移動"><PanSel className={small} /></Tool>
          <Tool label="選択行へズーム"><ZoomSel className={small} /></Tool>
          <Tool label="コピー"><Copy /></Tool>
          <Tool label="貼り付け"><Paste /></Tool>
          <Sep />
          <Tool label="カラム削除"><DelCol /></Tool>
          <Tool label="新規カラム"><NewCol /></Tool>
          <Tool label="フィールド計算機"><Abacus className={small} /></Tool>
          <span />
          <button type="button" className="text-[10px]">?</button>
        </div>
        <div className="flex-1 bg-linear-to-r from-[#efefef] from-[18px] to-white to-[18px]">
          <table className="w-[752px] table-fixed border-collapse text-[9px]">
            <thead>
              <tr className="h-4 bg-linear-to-b from-[#fbfbfb] to-[#e6e6e6]">
                <td className="w-[17px] border border-[#9c9c9c]" />
                {COLUMNS.map((c, i) => (
                  <th key={c} scope="col" className="border border-[#9c9c9c] p-0 font-normal leading-none">
                    {i === 0 ? (
                      <span className="flex items-center justify-between pl-4 pr-1">
                        {c}
                        <svg viewBox="0 0 10 6" className="h-[6px] w-[10px]" fill="none" stroke="#aaa" aria-hidden="true"><path d="M1 1h8L5 5z" /></svg>
                      </span>
                    ) : c}
                  </th>
                ))}
              </tr>
            </thead>
            <tbody>
              <tr className="h-6">
                <th scope="row" className="border border-[#9c9c9c] bg-[#f3f3f3] p-0 font-normal">70</th>
                {VALUES.map((v, i) => (
                  <td key={i} className={"whitespace-nowrap border border-[#8fa9c4] bg-[#3399ff] p-0 pl-[3px] align-top leading-[10px] text-white " + (v === "NULL" ? "italic" : "")}>{v}</td>
                ))}
              </tr>
            </tbody>
          </table>
        </div>
        <div className="flex h-[26px] shrink-0 items-center border-t border-[#b4b4b4] px-px">
          <button type="button" className="flex h-[21px] items-center gap-1 rounded-xs border border-[#a4a4a4] bg-linear-to-b from-white to-[#ebebeb] pl-1 text-[9px]">
            <svg viewBox="0 0 12 12" className="h-3 w-3" aria-hidden="true"><path d="M2 1h8l2 2v8H8V6L6 4 4 6v5H0V3z" fill="#8f948f" /><path d="M3 1h6L7 5v6H5V5z" fill="#e8e8e8" /></svg>
            選択した地物を表示する
            <span className="-ml-1 self-end"><SmallArrow /></span>
          </button>
          <button type="button" aria-label="フォーム表示" className="ml-auto flex h-[21px] w-[22px] items-center justify-center rounded-l-xs border border-[#8d8d8d] bg-white">
            <Svg className="h-4 w-4"><rect x="3" y="4" width="18" height="16" fill="#fff" stroke="#4f86c4" strokeWidth="1.500" /><path d="M2 4h20" stroke="#2f6fb8" strokeWidth="3" /><path d="M6 10h3M11 10h8M6 13h3M11 13h8M6 16h3M11 16h8" stroke="#3b77c2" strokeWidth="1.800" /></Svg>
          </button>
          <button type="button" aria-label="テーブル表示" className="flex h-[21px] w-[21px] items-center justify-center rounded-r-xs border border-[#8d8d8d] bg-[#cfcfcf]">
            <Svg className="h-4 w-4"><rect x="4" y="3" width="16" height="18" fill="#dfe8ea" stroke="#8ea7b1" strokeWidth="1.500" /><path d="M4 5h16M9 5v16M11 10h7M11 14h7M11 18h7M5 10h2M5 14h2M5 18h2" stroke="#8ea7b1" strokeWidth="1.600" /></Svg>
          </button>
        </div>
      </div>
    </div>
  );
}

export default function App() {
  return (
    <div className="relative flex h-screen flex-col overflow-hidden bg-white font-['Liberation_Sans','Noto_Sans_CJK_JP',sans-serif] text-black">
      <div className="flex min-h-0 flex-1">
        <main className="flex min-w-0 flex-1 flex-col border-r border-[#c0c0c0] bg-[#f0f0f0]">
          <header className="flex h-[9px] shrink-0 items-end justify-between overflow-hidden border-b border-[#5d7699] bg-linear-to-r from-[#a9bedd] via-[#8aa5cf] to-[#8ea9d3] pl-[2px]">
            <div className="flex items-center gap-1 font-['Noto_Sans',sans-serif] text-[11px] leading-[14px]">
              <QLogo className="h-3 w-3" />
              <span>QGIS2.10.1-Pisa - static</span>
            </div>
            <div className="mb-[3px] mr-[2px] flex h-[12px] rounded-b border border-[#61799d]">
              <button type="button" aria-label="最小化" className="flex w-6 items-end justify-center border-r border-[#61799d] pb-[3px]"><span className="h-[4px] w-[9px] border border-[#5a6577] bg-white" /></button>
              <button type="button" aria-label="元のサイズ" className="flex w-[21px] items-end justify-center border-r border-[#61799d] pb-[3px]"><span className="h-[6px] w-[8px] border border-[#5a6577] bg-white" /></button>
              <button type="button" aria-label="閉じる" className="flex w-[38px] items-end justify-center pb-[3px]"><svg viewBox="0 0 10 10" className="h-[9px] w-[9px]"><path d="M1 1l8 8M9 1L1 9" stroke="#5a6577" strokeWidth="3.500" /><path d="M1.500 1.500l7 7M8.500 1.500l-7 7" stroke="#fff" strokeWidth="1.800" /></svg></button>
            </div>
          </header>
          <MenuBar />
          <MainToolbar />
          <EditToolbars />
          <div className="flex min-h-0 flex-1">
            <aside className="flex w-[236px] shrink-0 flex-col">
              <LayerPanel />
              <RoutePanel />
            </aside>
            <div className="flex w-[5px] shrink-0 items-center justify-center"><span className="h-[60px] w-[3px] bg-[radial-gradient(#c6c6c6_1px,transparent_1px)] bg-[length:3px_4px]" /></div>
            <div className="relative mr-px flex-1 overflow-hidden border border-[#b4b4b4] bg-white"><MapCanvas /></div>
          </div>
          <StatusBar />
        </main>
        <div className="w-[5px] shrink-0 bg-white pt-[11px]"><div className="h-[21px] bg-[#d24726]" /></div>
      </div>
      <div className="h-[2px] shrink-0 bg-[#3a6ea5]" />
      <AttributeDialog />
    </div>
  );
}
